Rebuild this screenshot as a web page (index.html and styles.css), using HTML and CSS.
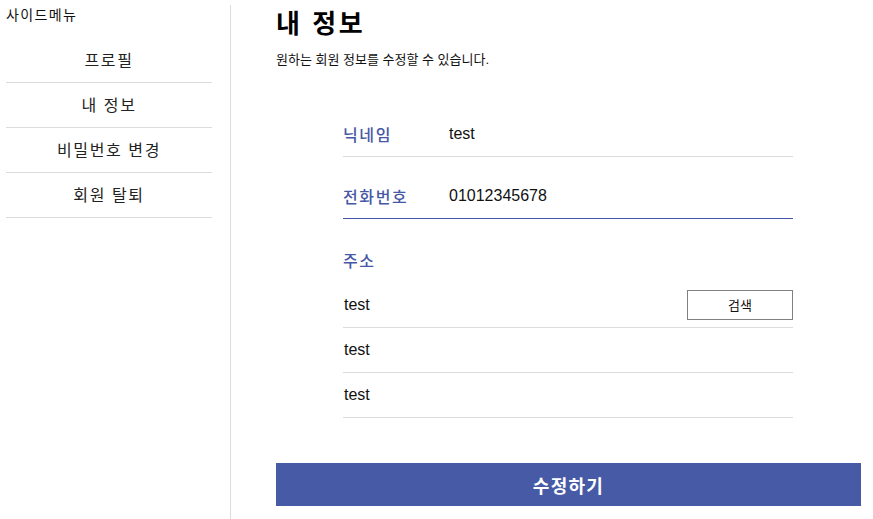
FILE: index.html
```html
<!DOCTYPE html>
<html lang="ko">
<head>
<meta charset="utf-8">
<title>내 정보</title>
<link rel="stylesheet" href="styles.css">
</head>
<body>
<div class="page">
  <aside class="sidebar">
    <div class="side-title">사이드메뉴</div>
    <ul class="menu">
      <li>프로필</li>
      <li>내 정보</li>
      <li>비밀번호 변경</li>
      <li>회원 탈퇴</li>
    </ul>
  </aside>
  <main class="main">
    <h1 class="title">내 정보</h1>
    <p class="desc">원하는 회원 정보를 수정할 수 있습니다.</p>
    <div class="form">
      <div class="row">
        <span class="label">닉네임</span>
        <span class="value">test</span>
      </div>
      <div class="row row-active">
        <span class="label">전화번호</span>
        <span class="value">01012345678</span>
      </div>
      <div class="addr-label">주소</div>
      <div class="addr-row">
        <span class="value">test</span>
        <button class="search-btn" type="button">검색</button>
      </div>
      <div class="addr-row"><span class="value">test</span></div>
      <div class="addr-row"><span class="value">test</span></div>
    </div>
    <button class="submit" type="button">수정하기</button>
  </main>
</div>
</body>
</html>
```

FILE: styles.css
```css
* { box-sizing: border-box; }
html, body {
  margin: 0;
  padding: 0;
  background: #fff;
  font-family: "Liberation Sans", "Noto Sans CJK KR", sans-serif;
  color: #111;
}
.page {
  display: flex;
  padding-top: 5px;
  min-height: 519px;
}
.sidebar {
  width: 231px;
  flex: 0 0 231px;
  padding: 0 18px 0 6px;
  border-right: 1px solid #dcdcdc;
}
.side-title {
  font-size: 14px;
  line-height: 20px;
  color: #111;
  letter-spacing: 0.1em;
}
.menu {
  list-style: none;
  margin: 13px 0 0;
  padding: 0;
}
.menu li {
  height: 45px;
  padding-top: 2px;
  line-height: 42px;
  text-align: center;
  font-size: 16px;
  color: #222;
  letter-spacing: 0.1em;
  border-bottom: 1px solid #dcdcdc;
}
.main {
  flex: 0 0 585px;
  margin-left: 45px;
}
.title {
  margin: 0;
  padding-top: 2px;
  font-size: 26px;
  line-height: 34px;
  font-weight: 700;
  color: #000;
  letter-spacing: 0.1em;
}
.desc {
  margin: 8px 0 0;
  font-size: 13px;
  line-height: 22px;
  color: #111;
}
.form {
  width: 450px;
  margin: 41px 0 0 67px;
}
.row {
  display: flex;
  align-items: center;
  height: 45px;
  border-bottom: 1px solid #dcdcdc;
}
.row + .row { margin-top: 17px; }
.row-active { border-bottom-color: #4658a5; }
.label {
  width: 106px;
  flex: 0 0 106px;
  font-size: 16px;
  color: #4658a5;
  font-weight: 500;
  letter-spacing: 0.1em;
}
.value {
  font-size: 16px;
  color: #111;
}
.addr-label {
  margin-top: 22px;
  height: 42px;
  line-height: 42px;
  font-size: 16px;
  color: #4658a5;
  font-weight: 500;
  letter-spacing: 0.1em;
}
.addr-row {
  display: flex;
  align-items: center;
  justify-content: space-between;
  height: 45px;
  padding-bottom: 1px;
  border-bottom: 1px solid #dcdcdc;
  padding-left: 1px;
}
.search-btn {
  width: 106px;
  height: 30px;
  border: 1px solid #808080;
  background: #fff;
  font-family: "Liberation Sans", "Noto Sans CJK KR", sans-serif;
  font-size: 13px;
  color: #111;
  padding: 0;
}
.submit {
  display: block;
  width: 585px;
  height: 43px;
  margin-top: 45px;
  border: 0;
  background: #465aa6;
  color: #fff;
  font-family: "Liberation Sans", "Noto Sans CJK KR", sans-serif;
  font-size: 18px;
  font-weight: 700;
  letter-spacing: 0.07em;
}
```
